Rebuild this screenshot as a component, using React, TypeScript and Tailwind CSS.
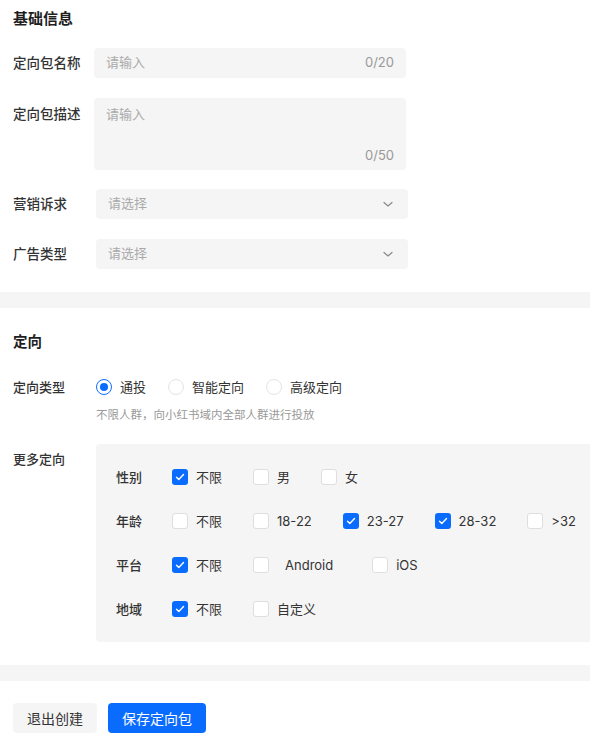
import React from 'react';

const BLUE = 'bg-[#0a6cff]';

const CheckIcon: React.FC<React.SVGProps<SVGSVGElement>> = (props) => (
  <svg viewBox="0 0 16 16" fill="none" stroke="currentColor" strokeWidth={1.4} strokeLinecap="round" strokeLinejoin="round" {...props}>
    <path d="M4.5 8.2l2.3 2.3 4.7-4.9" />
  </svg>
);

const ChevronDown: React.FC<React.SVGProps<SVGSVGElement>> = (props) => (
  <svg viewBox="0 0 12 12" fill="none" stroke="currentColor" strokeWidth={1.2} strokeLinecap="round" strokeLinejoin="round" {...props}>
    <path d="M2 4.5l4 3.5 4-3.5" />
  </svg>
);

const Checkbox = ({ label, checked, textClass = '' }: { label: string; checked?: boolean; textClass?: string }) => (
  <div className="flex items-center gap-2 h-5 shrink-0">
    {checked ? (
      <span className={`w-4 h-4 rounded-[3px] ${BLUE} text-white flex items-center justify-center`}>
        <CheckIcon className="w-4 h-4" />
      </span>
    ) : (
      <span className="w-4 h-4 rounded-[3px] bg-white border border-[#dedede]" />
    )}
    <span className={`text-[13px] leading-5 text-[#333] ${textClass}`}>{label}</span>
  </div>
);

const Radio = ({ label, checked }: { label: string; checked?: boolean }) => (
  <div className="flex items-center gap-2 h-5">
    {checked ? (
      <span className="w-4 h-4 rounded-full border-[1.5px] border-[#0a6cff] bg-white flex items-center justify-center">
        <span className={`w-2 h-2 rounded-full ${BLUE}`} />
      </span>
    ) : (
      <span className="w-4 h-4 rounded-full border border-[#e4e4e4] bg-white" />
    )}
    <span className="text-[13px] leading-5 text-[#333]">{label}</span>
  </div>
);

const TargetRow = ({ title, children }: { title: string; children: React.ReactNode }) => (
  <div className="flex items-center h-5">
    <div className="w-[56px] shrink-0 text-[13px] leading-5 font-medium text-[#333]">{title}</div>
    <div className="flex items-center gap-[31px]">{children}</div>
  </div>
);

export default function App() {
  return (
    <div className="w-[590px] min-h-[746px] bg-white overflow-hidden font-['Inter','Noto_Sans_CJK_SC',sans-serif] text-[#333]">
      {/* 基础信息 */}
      <section className="pl-[13px] pt-[9px] pb-[23px]">
        <h2 className="text-[15px] leading-5 font-bold text-[#1f1f1f]">基础信息</h2>

        <div className="mt-[19px] flex items-center">
          <div className="w-[81px] shrink-0 text-[13.5px] leading-5 font-medium">定向包名称</div>
          <div className="w-[312px] h-[30px] rounded-[4px] bg-[#f5f5f5] px-3 flex items-center justify-between text-[13px]">
            <span className="text-[#aaa]">请输入</span>
            <span className="text-[#999]">0/20</span>
          </div>
        </div>

        <div className="mt-5 flex items-start">
          <div className="w-[81px] shrink-0 pt-[6px] text-[13.5px] leading-5 font-medium">定向包描述</div>
          <div className="w-[312px] h-[72px] rounded-[4px] bg-[#f5f5f5] px-3 pt-[6px] pb-[5px] flex flex-col justify-between text-[13px] leading-5">
            <span className="text-[#aaa]">请输入</span>
            <span className="self-end text-[#999]">0/50</span>
          </div>
        </div>

        <div className="mt-[19px] flex items-center">
          <div className="w-[83px] shrink-0 text-[13.5px] leading-5 font-medium">营销诉求</div>
          <div className="w-[312px] h-[30px] rounded-[4px] bg-[#f5f5f5] pl-3 pr-[14px] flex items-center justify-between text-[13px]">
            <span className="text-[#aaa]">请选择</span>
            <ChevronDown className="w-3 h-3 text-[#888]" />
          </div>
        </div>

        <div className="mt-5 flex items-center">
          <div className="w-[83px] shrink-0 text-[13.5px] leading-5 font-medium">广告类型</div>
          <div className="w-[312px] h-[30px] rounded-[4px] bg-[#f5f5f5] pl-3 pr-[14px] flex items-center justify-between text-[13px]">
            <span className="text-[#aaa]">请选择</span>
            <ChevronDown className="w-3 h-3 text-[#888]" />
          </div>
        </div>
      </section>

      <div className="h-4 bg-[#f5f5f5]" />

      {/* 定向 */}
      <section className="pl-[13px] pt-6 pb-[23px]">
        <h2 className="text-[14.5px] leading-5 font-bold text-[#1f1f1f]">定向</h2>

        <div className="mt-[25px] flex items-center">
          <div className="w-[83px] shrink-0 text-[13px] leading-5 font-medium">定向类型</div>
          <div className="flex items-center gap-[22px]">
            <Radio label="通投" checked />
            <Radio label="智能定向" />
            <Radio label="高级定向" />
          </div>
        </div>
        <p className="ml-[83px] mt-[9px] text-[11.5px] leading-[18px] text-[#999]">不限人群，向小红书域内全部人群进行投放</p>

        <div className="mt-5 flex items-start">
          <div className="w-[83px] shrink-0 pt-[5px] text-[13px] leading-5 font-medium">更多定向</div>
          <div className="w-[510px] shrink-0 rounded-l-[4px] bg-[#f5f5f5] pl-5 pt-[23px] pb-[23px] flex flex-col gap-6">
            <TargetRow title="性别">
              <Checkbox label="不限" checked />
              <Checkbox label="男" />
              <Checkbox label="女" />
            </TargetRow>
            <TargetRow title="年龄">
              <Checkbox label="不限" />
              <Checkbox label="18-22" />
              <Checkbox label="23-27" checked />
              <Checkbox label="28-32" checked />
              <Checkbox label=">32" />
            </TargetRow>
            <TargetRow title="平台">
              <Checkbox label="不限" checked />
              <Checkbox label="Android" textClass="px-2" />
              <Checkbox label="iOS" />
            </TargetRow>
            <TargetRow title="地域">
              <Checkbox label="不限" checked />
              <Checkbox label="自定义" />
            </TargetRow>
          </div>
        </div>
      </section>

      <div className="h-4 bg-[#f5f5f5]" />

      <div className="pl-[13px] pt-[22px] flex items-center gap-[11px]">
        <button className="h-[30px] px-[14px] rounded-[4px] bg-[#f5f5f5] text-[14px] text-[#333]">退出创建</button>
        <button className={`h-[30px] px-[14px] rounded-[4px] ${BLUE} text-[14px] text-white`}>保存定向包</button>
      </div>
    </div>
  );
}
